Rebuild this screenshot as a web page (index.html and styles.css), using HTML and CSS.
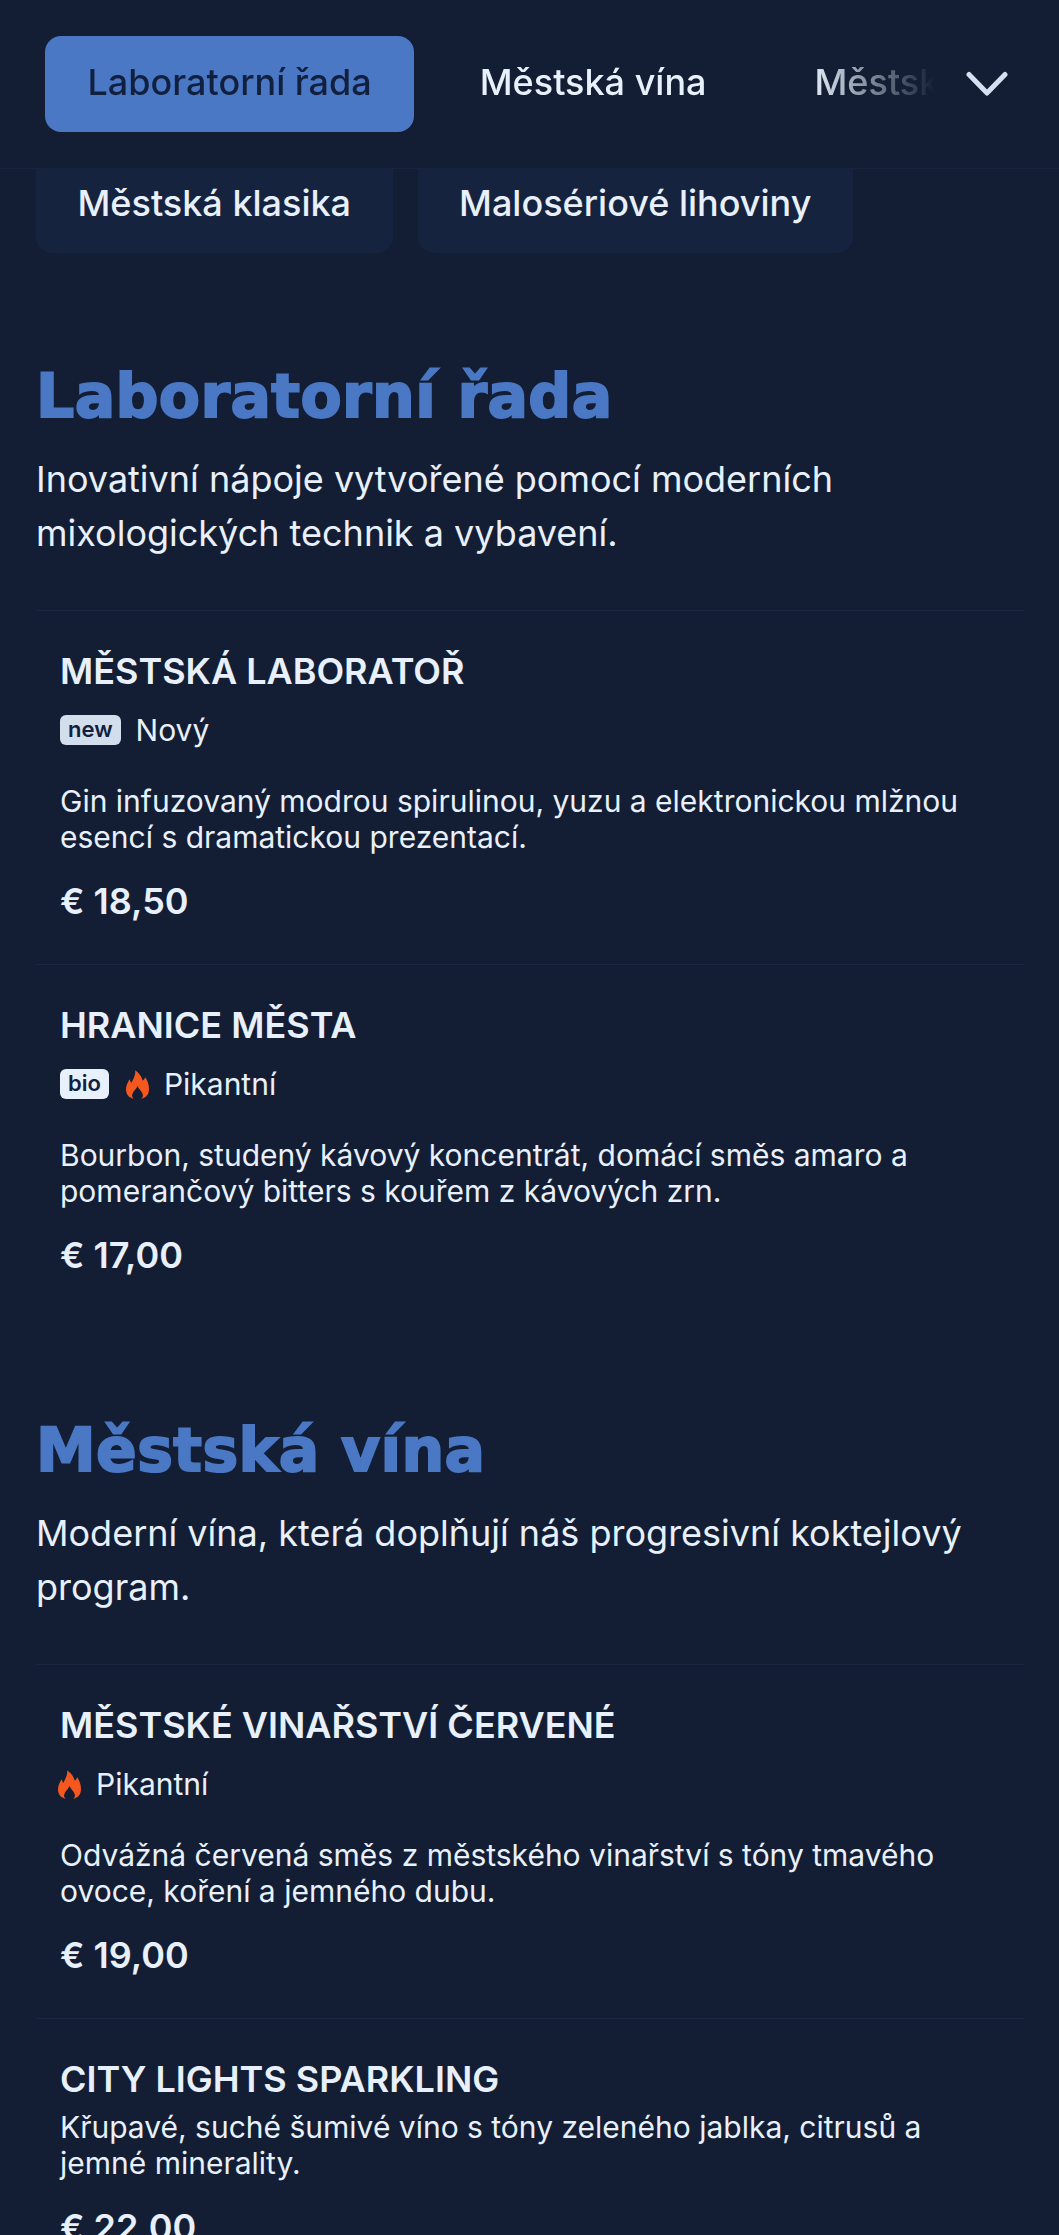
FILE: index.html
```html
<!DOCTYPE html>
<html lang="cs">
<head>
<meta charset="utf-8">
<title>Menu</title>
<link rel="stylesheet" href="styles.css">
</head>
<body>
<header class="topbar">
  <nav class="tabs">
    <a class="tab tab-active">Laboratorní řada</a>
    <a class="tab">Městská vína</a>
    <a class="tab">Městská klasika</a>
  </nav>
  <svg class="chevron" viewBox="0 0 42 26" aria-hidden="true"><path d="M3 3.5 21 22 39 3.5"/></svg>
</header>
<div class="pills">
  <a class="pill">Městská klasika</a>
  <a class="pill">Malosériové lihoviny</a>
</div>
<main>
  <section class="section">
    <h2>Laboratorní řada</h2>
    <p class="lead">Inovativní nápoje vytvořené pomocí moderních mixologických technik a vybavení.</p>
    <article class="item">
      <h3>MĚSTSKÁ LABORATOŘ</h3>
      <div class="tags"><span class="badge badge-new">new</span><span>Nový</span></div>
      <p class="desc">Gin infuzovaný modrou spirulinou, yuzu a elektronickou mlžnou esencí s dramatickou prezentací.</p>
      <div class="price">€ 18,50</div>
    </article>
    <article class="item">
      <h3>HRANICE MĚSTA</h3>
      <div class="tags"><span class="badge badge-bio">bio</span><svg class="flame" viewBox="0 0 24 30" aria-hidden="true"><path d="M8 30C3 29 0 25 0 20 0 15.500 2 13 3.500 9.500 4.500 11 5 12.500 5.500 13.500 7 10 10.500 5 9.500 0 14 3 16.500 7 17.500 11 18.500 10.500 19.500 9 20 7.500 22.500 11 24 15 24 20 24 25 21 29 16 30 18 28 18 26 17 24 16 21.500 13.500 20 12 16.500 10.500 20 8 21.500 7 24 6 26 6 28 8 30Z"/></svg><span>Pikantní</span></div>
      <p class="desc">Bourbon, studený kávový koncentrát, domácí směs amaro a pomerančový bitters s kouřem z kávových zrn.</p>
      <div class="price">€ 17,00</div>
    </article>
  </section>
  <section class="section">
    <h2>Městská vína</h2>
    <p class="lead">Moderní vína, která doplňují náš progresivní koktejlový program.</p>
    <article class="item">
      <h3>MĚSTSKÉ VINAŘSTVÍ ČERVENÉ</h3>
      <div class="tags"><svg class="flame" viewBox="0 0 24 30" aria-hidden="true"><path d="M8 30C3 29 0 25 0 20 0 15.500 2 13 3.500 9.500 4.500 11 5 12.500 5.500 13.500 7 10 10.500 5 9.500 0 14 3 16.500 7 17.500 11 18.500 10.500 19.500 9 20 7.500 22.500 11 24 15 24 20 24 25 21 29 16 30 18 28 18 26 17 24 16 21.500 13.500 20 12 16.500 10.500 20 8 21.500 7 24 6 26 6 28 8 30Z"/></svg><span>Pikantní</span></div>
      <p class="desc">Odvážná červená směs z městského vinařství s tóny tmavého ovoce, koření a jemného dubu.</p>
      <div class="price">€ 19,00</div>
    </article>
    <article class="item item-plain">
      <h3>CITY LIGHTS SPARKLING</h3>
      <p class="desc">Křupavé, suché šumivé víno s tóny zeleného jablka, citrusů a jemné minerality.</p>
      <div class="price">€ 22,00</div>
    </article>
  </section>
</main>
</body>
</html>
```
FILE: styles.css
```css
* { box-sizing: border-box; }
html, body { margin: 0; height: 2235px; overflow: hidden; }
body {
  background: #131e35;
  color: #e8f0fb;
  font-family: Inter, "Liberation Sans", sans-serif;
}
.topbar {
  display: flex;
  align-items: flex-start;
  height: 169px;
  padding: 36px 0 0 45px;
  border-bottom: 1px solid #18243d;
}
.tabs {
  display: flex;
  gap: 23px;
  width: 890px;
  overflow: hidden;
  -webkit-mask-image: linear-gradient(to right, #000 86%, transparent 100%);
  mask-image: linear-gradient(to right, #000 86%, transparent 100%);
}
.tab {
  flex: none;
  height: 96px;
  line-height: 92px;
  padding: 0 42.5px;
  font-size: 36px;
  font-weight: 500;
  border-radius: 16px;
  white-space: nowrap;
}
.tab-active { background: #4a78c4; color: #12203f; }
.chevron {
  flex: none;
  width: 42px;
  height: 26px;
  margin: 35px 0 0 31px;
  fill: none;
  stroke: #d5e0f0;
  stroke-width: 5;
  stroke-linecap: round;
  stroke-linejoin: round;
}
.pills {
  display: flex;
  gap: 25px;
  padding: 0 36px;
}
.pill {
  height: 84px;
  line-height: 68px;
  padding: 0 41.5px;
  font-size: 36px;
  font-weight: 500;
  background: #16233f;
  border-radius: 0 0 16px 16px;
  white-space: nowrap;
}
main { padding: 0 35px 0 36px; }
.section { padding-top: 108px; }
.section + .section { padding-top: 97px; }
h2 {
  margin: 0;
  font-family: "DejaVu Sans", Inter, sans-serif;
  font-size: 60px;
  line-height: 70px;
  font-weight: 700;
  letter-spacing: 0.4px;
  color: #4a78c4;
  -webkit-text-stroke: 2px #4a78c4;
}
.lead {
  margin: 21px 0 0;
  font-size: 36px;
  line-height: 54px;
  color: #e8f0fb;
}
.item {
  padding: 38px 24px 40px;
  border-top: 1px solid #1a2740;
}
.lead + .item { margin-top: 50px; }
h3 {
  margin: 0;
  font-size: 36px;
  line-height: 44px;
  font-weight: 600;
}
.tags {
  display: flex;
  align-items: center;
  gap: 15px;
  height: 40px;
  margin-top: 17px;
  font-size: 30px;
}
.badge {
  display: inline-block;
  height: 30px;
  line-height: 28px;
  padding: 0 8px;
  font-size: 22px;
  font-weight: 600;
  color: #12203f;
  border-radius: 6px;
}
.badge-new { background: #d3deed; }
.badge-bio { background: #e8f0fb; }
.flame { width: 23px; height: 31px; margin: 0 0 0 -2px; fill: #f4581e; flex: none; }
.badge + .flame { margin-left: 2px; }
.desc {
  margin: 33px 0 0;
  font-size: 30px;
  line-height: 36px;
}
.price {
  margin-top: 23px;
  font-size: 36px;
  line-height: 46px;
  font-weight: 600;
}
.item-plain .desc { margin-top: 8px; }
```
